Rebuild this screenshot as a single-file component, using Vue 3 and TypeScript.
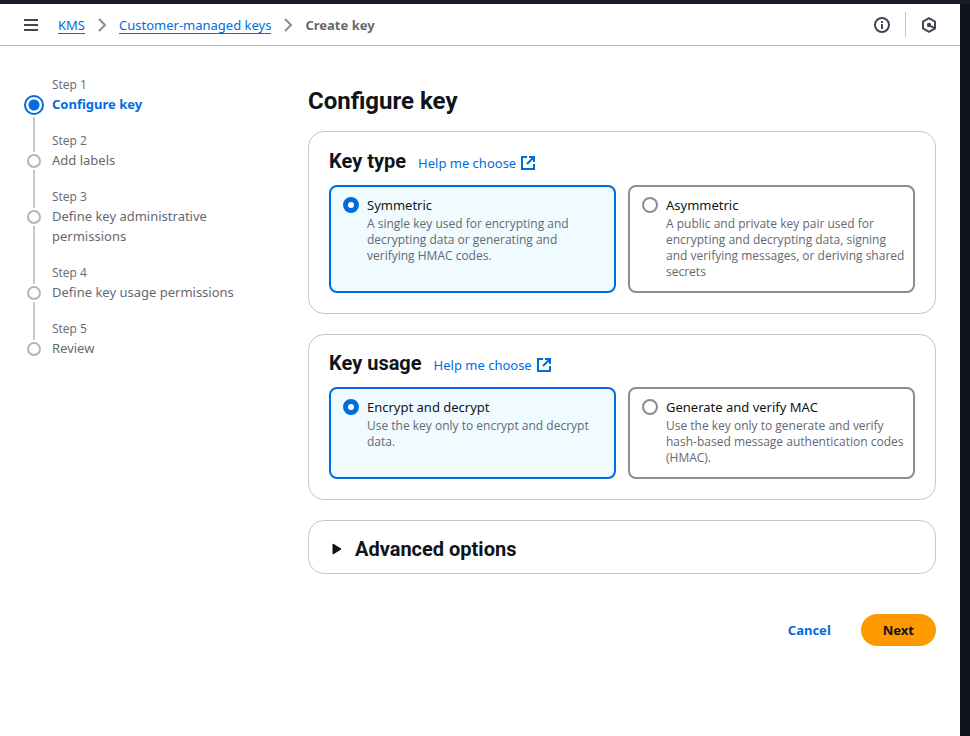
<script setup lang="ts">
import { reactive } from 'vue'

interface Step {
  title: string
}

interface Option {
  value: string
  label: string
  description: string
}

interface Group {
  id: 'type' | 'usage'
  title: string
  options: Option[]
}

const steps: Step[] = [
  { title: 'Configure key' },
  { title: 'Add labels' },
  { title: 'Define key administrative permissions' },
  { title: 'Define key usage permissions' },
  { title: 'Review' },
]
const currentStep = 0

const groups: Group[] = [
  {
    id: 'type',
    title: 'Key type',
    options: [
      {
        value: 'symmetric',
        label: 'Symmetric',
        description:
          'A single key used for encrypting and decrypting data or generating and verifying HMAC codes.',
      },
      {
        value: 'asymmetric',
        label: 'Asymmetric',
        description:
          'A public and private key pair used for encrypting and decrypting data, signing and verifying messages, or deriving shared secrets',
      },
    ],
  },
  {
    id: 'usage',
    title: 'Key usage',
    options: [
      {
        value: 'encrypt',
        label: 'Encrypt and decrypt',
        description: 'Use the key only to encrypt and decrypt data.',
      },
      {
        value: 'mac',
        label: 'Generate and verify MAC',
        description:
          'Use the key only to generate and verify hash-based message authentication codes (HMAC).',
      },
    ],
  },
]

const selected = reactive<Record<Group['id'], string>>({
  type: 'symmetric',
  usage: 'encrypt',
})
</script>

<template>
  <div class="shell">
    <div class="page">
      <header class="toolbar">
        <button class="icon-button" type="button" aria-label="Open navigation">
          <svg width="16" height="16" viewBox="0 0 16 16">
            <path d="M1 3h14M1 8h14M1 13h14" fill="none" stroke="#424650" stroke-width="2" />
          </svg>
        </button>
        <nav class="breadcrumbs" aria-label="Breadcrumbs">
          <a href="#kms">KMS</a>
          <svg width="16" height="16" viewBox="0 0 16 16" aria-hidden="true">
            <path d="M5 2l6 6-6 6" fill="none" stroke="#8c8c94" stroke-width="2" />
          </svg>
          <a href="#keys">Customer-managed keys</a>
          <svg width="16" height="16" viewBox="0 0 16 16" aria-hidden="true">
            <path d="M5 2l6 6-6 6" fill="none" stroke="#8c8c94" stroke-width="2" />
          </svg>
          <span class="current">Create key</span>
        </nav>
        <div class="tools">
          <button class="icon-button" type="button" aria-label="Info">
            <svg width="16" height="16" viewBox="0 0 16 16">
              <circle cx="8" cy="8" r="7" fill="none" stroke="#424650" stroke-width="2" />
              <path d="M8 7v5M8 4v2" fill="none" stroke="#424650" stroke-width="2" />
            </svg>
          </button>
          <span class="divider"></span>
          <button class="icon-button" type="button" aria-label="Assistant">
            <svg width="16" height="16" viewBox="0 0 16 16">
              <path
                d="M8 1.200l6 3.400v6.800l-6 3.400-6-3.400V4.600z"
                fill="none"
                stroke="#424650"
                stroke-width="2"
                stroke-linejoin="round"
              />
              <circle cx="8" cy="8" r="2.200" fill="#424650" />
              <path d="M8 8l5.500 3.200" stroke="#424650" stroke-width="2" />
            </svg>
          </button>
        </div>
      </header>

      <div class="layout">
        <ol class="steps">
          <li
            v-for="(step, index) in steps"
            :key="step.title"
            class="step"
            :class="{ active: index === currentStep }"
          >
            <span class="number">Step {{ index + 1 }}</span>
            <span class="marker"></span>
            <span class="name">{{ step.title }}</span>
            <span class="line"></span>
          </li>
        </ol>

        <main class="content">
          <h1>Configure key</h1>

          <section v-for="group in groups" :key="group.id" class="card">
            <div class="card-header">
              <h2 :id="`heading-${group.id}`">{{ group.title }}</h2>
              <a class="help" href="#help">
                Help me choose
                <svg width="16" height="16" viewBox="0 0 16 16" aria-hidden="true">
                  <path
                    d="M7 2H2v12h12V9M9 2h5v5M14 2L7 9"
                    fill="none"
                    stroke="#006ce0"
                    stroke-width="2"
                  />
                </svg>
              </a>
            </div>
            <div class="tiles" role="radiogroup" :aria-labelledby="`heading-${group.id}`">
              <label
                v-for="option in group.options"
                :key="option.value"
                class="tile"
                :class="{ selected: selected[group.id] === option.value }"
              >
                <input
                  v-model="selected[group.id]"
                  type="radio"
                  :name="group.id"
                  :value="option.value"
                />
                <span class="tile-text">
                  <span class="tile-label">{{ option.label }}</span>
                  <span class="tile-description">{{ option.description }}</span>
                </span>
              </label>
            </div>
          </section>

          <section class="card">
            <h2>
              <button class="expander" type="button" aria-expanded="false">
                <svg width="16" height="16" viewBox="0 0 16 16" aria-hidden="true">
                  <path
                    d="M4 3v10l8-5z"
                    fill="#0f141a"
                    stroke="#0f141a"
                    stroke-width="1"
                    stroke-linejoin="round"
                  />
                </svg>
                Advanced options
              </button>
            </h2>
          </section>

          <div class="actions">
            <button class="cancel" type="button">Cancel</button>
            <button class="next" type="button">Next</button>
          </div>
        </main>
      </div>
    </div>
  </div>
</template>

<style>
body {
  background: #0f141a;
}
</style>

<style scoped>
.shell {
  box-sizing: border-box;
  min-height: 100vh;
  display: flex;
  padding-right: 10px;
  border-top: 4px solid #161d26;
  color: #0f141a;
  font-family: 'Noto Sans', 'Open Sans', sans-serif;
  font-size: 13px;
  line-height: 20px;
}

.page {
  flex: 1;
  background: #fff;
}

button {
  padding: 0;
  border: 0;
  background: none;
  color: inherit;
  font: inherit;
  cursor: pointer;
}

svg {
  display: block;
  flex: none;
}

a {
  color: #006ce0;
  text-decoration: none;
}

h1,
h2 {
  margin: 0;
  font-family: Roboto, 'Noto Sans', sans-serif;
  font-weight: 700;
}

h1 {
  margin-bottom: -4px;
  font-size: 24px;
  line-height: 28px;
}

h2 {
  font-size: 20px;
  line-height: 24px;
}

.toolbar {
  display: flex;
  align-items: center;
  height: 41px;
  padding: 0 23px;
  border-bottom: 1px solid #b4b4bb;
}

.breadcrumbs {
  display: flex;
  align-items: center;
  gap: 9px;
  margin-left: 19px;
}

.breadcrumbs a {
  line-height: 16px;
  padding-top: 1px;
  border-bottom: 1px solid #006ce0;
}

.current {
  color: #656871;
  font-weight: 700;
}

.tools {
  display: flex;
  align-items: center;
  gap: 15px;
  margin-left: auto;
}

.divider {
  width: 1px;
  height: 25px;
  background: #c6c6cd;
}

.layout {
  display: grid;
  grid-template-columns: 220px minmax(0, 1fr);
  gap: 64px;
  padding: 31px 24px;
}

.steps {
  margin: 0;
  padding: 0;
  list-style: none;
}

.step {
  display: grid;
  grid-template-columns: 20px 1fr;
  grid-template-rows: 16px auto 1fr;
  column-gap: 8px;
  color: #656871;
}

.number,
.tile-description {
  font-family: 'Open Sans', 'Noto Sans', sans-serif;
  font-size: 12px;
  line-height: 16px;
}

.number {
  grid-column: 2;
}

.marker {
  box-sizing: border-box;
  width: 14px;
  height: 14px;
  margin: 5px 3px 0;
  border: 2px solid #b4b4bb;
  border-radius: 50%;
}

.name {
  grid-column: 2;
  grid-row: 2 / span 2;
  padding: 1px 0 19px;
}

.line {
  grid-column: 1;
  grid-row: 3;
  width: 2px;
  margin: 2px 9px -19px;
  background: #c6c6cd;
}

.step:last-child .line {
  visibility: hidden;
}

.active .marker {
  width: 20px;
  height: 20px;
  margin: 2px 0 0;
  border-color: #006ce0;
  background: radial-gradient(circle, #006ce0 5px, #fff 6px);
}

.active .name {
  color: #006ce0;
  font-weight: 700;
}

.content {
  display: flex;
  flex-direction: column;
  gap: 20px;
  padding-top: 10px;
}

.card {
  padding: 17px 20px 20px;
  border: 1px solid #c6c6cd;
  border-radius: 16px;
}

.card + .card {
  padding-top: 16px;
}

.card-header {
  display: flex;
  align-items: baseline;
  gap: 12px;
  margin-bottom: 12px;
}

.help {
  display: flex;
  align-items: center;
  gap: 4px;
}

.tiles {
  display: grid;
  grid-template-columns: 1fr 1fr;
  gap: 12px;
}

.tile {
  display: flex;
  gap: 8px;
  padding: 8px 8px 11px 12px;
  border: 2px solid #8c8c94;
  border-radius: 8px;
  cursor: pointer;
}

.tile.selected {
  border-color: #006ce0;
  background: #f0fbff;
}

.tile input {
  appearance: none;
  box-sizing: border-box;
  flex: none;
  width: 16px;
  height: 16px;
  margin: 2px 0;
  border: 2px solid #8c8c94;
  border-radius: 50%;
  background: #fff;
}

.tile input:checked {
  border: 5px solid #006ce0;
}

.tile-label,
.tile-description {
  display: block;
}

.tile-description {
  padding-top: 1px;
  color: #656871;
}

.expander {
  display: flex;
  align-items: center;
  gap: 10px;
}

.card:has(.expander) {
  padding: 16px 20px 12px;
}

.actions {
  display: flex;
  justify-content: flex-end;
  gap: 8px;
  margin-top: 20px;
}

.cancel,
.next {
  padding: 6px 22px;
  border-radius: 16px;
  font-weight: 700;
}

.cancel {
  color: #006ce0;
}

.next {
  background: #ff9900;
}
</style>
